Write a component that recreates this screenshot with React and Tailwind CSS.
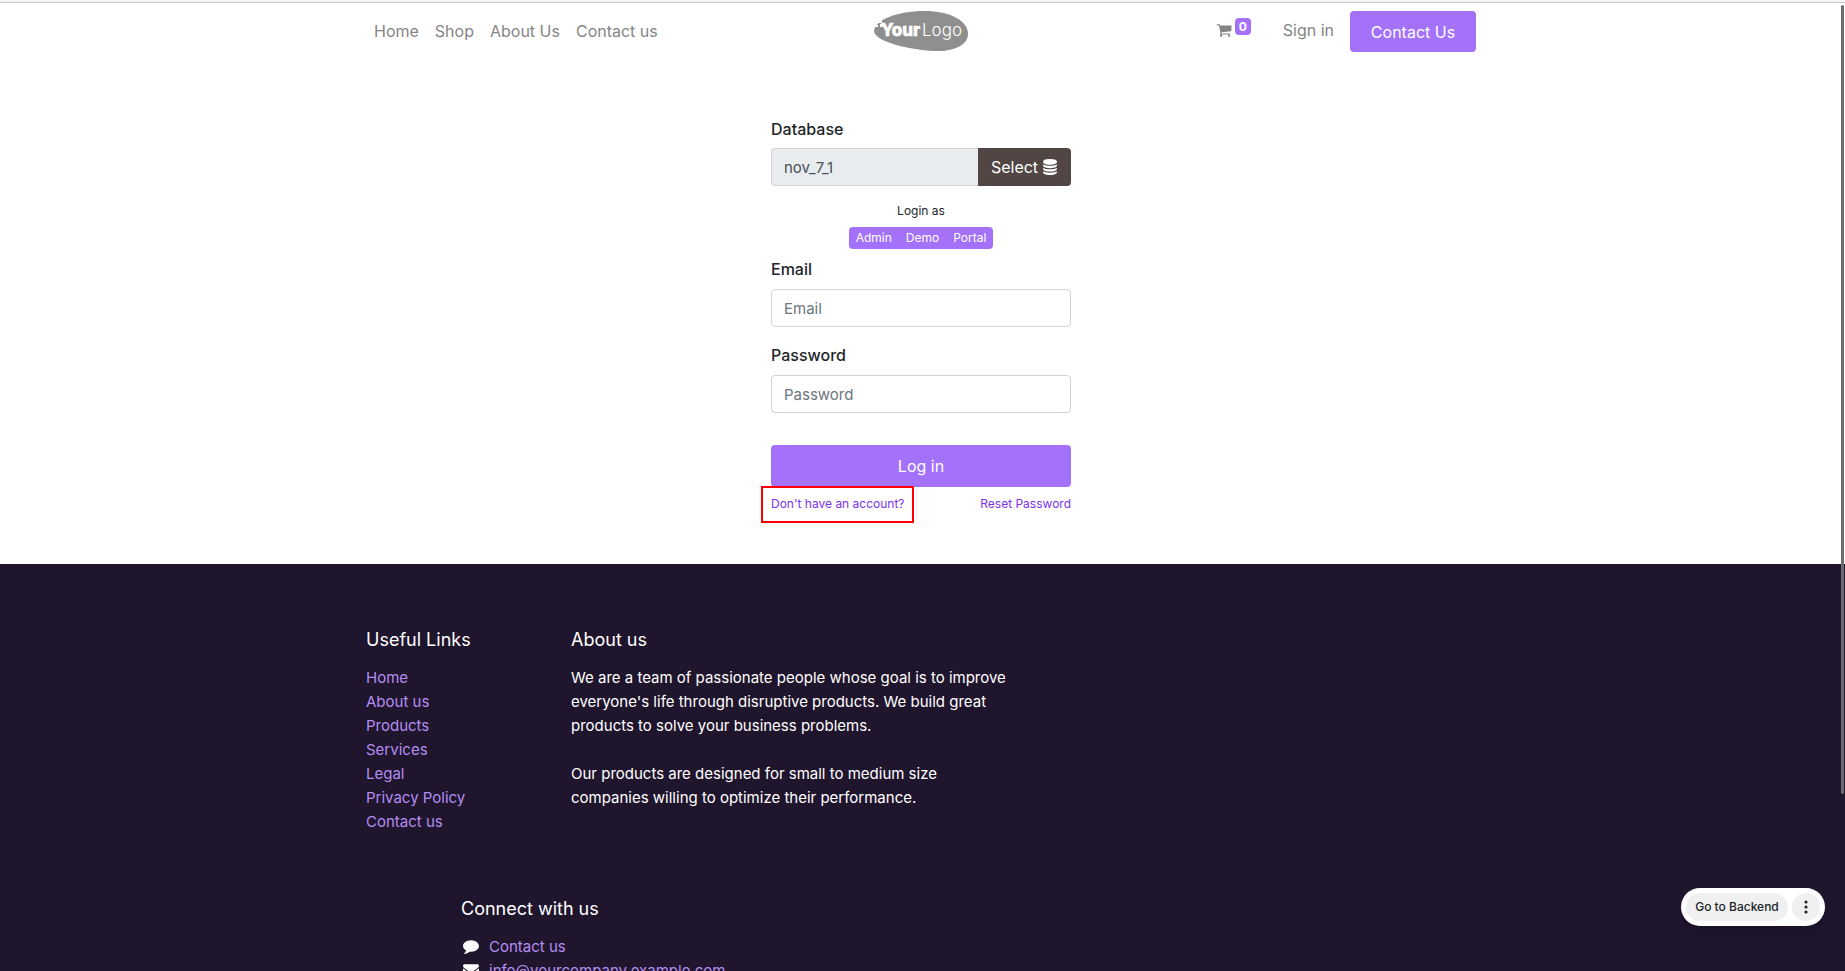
import React from "react";

const paths = {
  cart: "M704 1536q0 52-38 90t-90 38-90-38-38-90 38-90 90-38 90 38 38 90zm896 0q0 52-38 90t-90 38-90-38-38-90 38-90 90-38 90 38 38 90zm128-1088v512q0 24-16.5 42.5t-40.5 21.5l-1044 122q13 60 13 70 0 16-24 64h920q26 0 45 19t19 45-19 45-45 19h-1024q-26 0-45-19t-19-45q0-11 8-31.5t16-36 21.5-40 15.5-29.5l-177-823h-204q-26 0-45-19t-19-45 19-45 45-19h256q16 0 28.5 6.5t19.5 15.5 13 24.5 8 26 5.5 29.5 4.5 26h1201q26 0 45 19t19 45z",
  comment: "M1792 896q0 174-120 321.5t-326 233-450 85.5q-70 0-145-8-198 175-460 242-49 14-114 22-17 2-30.5-9t-17.5-29v-1q-3-4-.5-12t2-10 4.5-9.5l6-9 7-8.5 8-9q7-8 31-34.5t34.5-38 31-39.5 32.5-51 27-59 26-76q-157-89-247.5-220t-90.5-281q0-130 71-248.5t191-204.5 286-136.5 348-50.5q244 0 450 85.5t326 233 120 321.5z",
  envelope: "M1792 710v794q0 66-47 113t-113 47h-1472q-66 0-113-47t-47-113v-794q44 49 101 87 362 246 497 345 57 42 92.5 65.5t94.5 48 110 24.5h2q51 0 110-24.5t94.5-48 92.5-65.5q170-123 498-345 57-39 100-87zm0-294q0 79-49 151t-122 123q-376 261-468 325-10 7-42.5 31t-54 38.5-52 32.5-57.5 27-50 9h-2q-23 0-50-9t-57.5-27-52-32.5-54-38.5-42.5-31q-91-64-262-182.5t-205-142.5q-62-42-117-115.5t-55-136.5q0-78 41.5-130t118.5-52h1472q65 0 112.5 47t47.5 113z",
  database: "M896 768q237 0 443-43t325-127v170q0 69-103 128t-280 93.5-385 34.5-385-34.5-280-93.5-103-128v-170q119 84 325 127t443 43zm0 768q237 0 443-43t325-127v170q0 69-103 128t-280 93.5-385 34.5-385-34.5-280-93.5-103-128v-170q119 84 325 127t443 43zm0-384q237 0 443-43t325-127v170q0 69-103 128t-280 93.5-385 34.5-385-34.5-280-93.5-103-128v-170q119 84 325 127t443 43zm0-1152q208 0 385 34.5t280 93.5 103 128v128q0 69-103 128t-280 93.5-385 34.5-385-34.5-280-93.5-103-128v-128q0-69 103-128t280-93.5 385-34.5z",
};

function Icon({ name, className }) {
  return (
    <svg viewBox="0 0 1792 1792" fill="currentColor" aria-hidden="true" className={className}>
      <path d={paths[name]} />
    </svg>
  );
}

function Logo() {
  return (
    <svg viewBox="0 0 94 40" className="h-10 w-[94px]" role="img" aria-label="Your Logo">
      <path
        d="M0 20C1 9 23 0 50 0C77 0 94 10 94 23C94 33 82 40 64 40C42 40 1 32 0 20Z"
        fill="#8f8f8f"
      />
      <path d="M4 10h4v2h-4zM1 14h3v2h-3zM6 13h3v3h-3z" fill="#fff" />
      <text x="7" y="25" fill="#fff" stroke="#fff" strokeWidth="0.5" fontFamily="Inter, sans-serif" fontSize="17" fontWeight="800">Your</text>
      <text x="48" y="25" fill="#fff" fontFamily="Inter, sans-serif" fontSize="17" fontWeight="300">Logo</text>
    </svg>
  );
}

function Field({ id, label, type }) {
  return (
    <div className="flex flex-col gap-2">
      <label htmlFor={id} className="text-base leading-6 font-medium text-[#212529]">{label}</label>
      <input
        id={id}
        type={type}
        placeholder={label}
        className="h-[38px] w-full rounded border border-[#ced4da] bg-white px-3 text-[15px] text-[#495057] placeholder:text-[#6c757d]"
      />
    </div>
  );
}

const navLinks = ["Home", "Shop", "About Us", "Contact us"];
const usefulLinks = ["Home", "About us", "Products", "Services", "Legal", "Privacy Policy", "Contact us"];

export default function App() {
  return (
    <div className="relative flex h-screen flex-col overflow-hidden bg-white pr-[3px] font-['Inter',sans-serif] text-[#212529]">
      <div className="-mr-[3px] h-[3px] shrink-0 border-b border-[#c4c4c4] bg-[#f6f6f6]" />

      <header className="mx-auto grid w-full max-w-[1140px] shrink-0 grid-cols-[1fr_auto_1fr] items-start px-[15px] pt-2 pb-2">
        <nav className="flex gap-4 pt-2 pl-2 text-base leading-6 text-[#858585]">
          {navLinks.map((t) => (
            <a key={t} href="#">{t}</a>
          ))}
        </nav>
        <a href="#"><Logo /></a>
        <div className="flex items-start justify-end text-[#858585]">
          <a href="#" className="mt-[7px] mr-8 flex items-start gap-[3px]" aria-label="Cart, 0 items">
            <Icon name="cart" className="mt-1 size-4" />
            <span className="rounded bg-[#a471fa] px-1 text-xs leading-[17px] font-bold text-white">0</span>
          </a>
          <a href="#" className="mt-[7px] mr-4 text-base leading-6">Sign in</a>
          <a href="#" className="flex h-[41px] w-[126px] items-center justify-center rounded bg-[#a471fa] text-base text-white">
            Contact Us
          </a>
        </div>
      </header>

      <main className="shrink-0 pt-[57px] pb-[41px]">
        <form className="mx-auto flex w-[300px] flex-col" onSubmit={(e) => e.preventDefault()}>
          <div className="flex flex-col gap-[7px]">
            <label htmlFor="db" className="text-base leading-6 font-medium">Database</label>
            <div className="flex">
              <input
                id="db"
                type="text"
                readOnly
                defaultValue="nov_7_1"
                className="h-[38px] min-w-0 flex-1 rounded-l border border-r-0 border-[#ced4da] bg-[#e9ecef] px-3 text-[15px] text-[#495057]"
              />
              <button type="button" className="flex w-[93px] items-center justify-center gap-1 rounded-r bg-[#514644] text-base text-white">
                Select <Icon name="database" className="size-4" />
              </button>
            </div>
          </div>

          <p className="mt-4 text-center text-xs leading-[17px]">Login as</p>
          <div className="mt-2 flex self-center rounded bg-[#a471fa] text-xs leading-[22px] text-white">
            <button type="button" className="px-[7px]">Admin</button>
            <button type="button" className="px-[7px]">Demo</button>
            <button type="button" className="px-[7px]">Portal</button>
          </div>

          <div className="mt-2 flex flex-col gap-4">
            <Field id="email" label="Email" type="email" />
            <Field id="password" label="Password" type="password" />
          </div>

          <button type="submit" className="mt-8 h-[42px] rounded bg-[#a471fa] text-base text-white">Log in</button>
          <div className="-mx-[10px] flex items-start justify-between pr-[10px] text-xs text-[#7a32ea]">
            <a href="#" className="-mt-px h-[37px] border-2 border-[#fb0007] px-2 pt-[7px] leading-[18px]">Don't have an account?</a>
            <a href="#" className="pt-2 leading-[18px]">Reset Password</a>
          </div>
        </form>
      </main>

      <footer className="-mr-[3px] flex-1 bg-[#1f152d] pt-[65px] pr-[3px] text-white">
        <div className="mx-auto max-w-[1140px] px-[15px]">
          <div className="flex text-[15px] leading-6">
            <section className="w-[205px]">
              <h2 className="mb-[15px] text-lg leading-[22px]">Useful Links</h2>
              <ul className="text-[#b58df2]">
                {usefulLinks.map((t) => (
                  <li key={t}><a href="#">{t}</a></li>
                ))}
              </ul>
            </section>
            <section className="w-[445px]">
              <h2 className="mb-[15px] text-lg leading-[22px]">About us</h2>
              <p>
                We are a team of passionate people whose goal is to improve everyone's life through
                disruptive products. We build great products to solve your business problems.
              </p>
              <p className="mt-6">
                Our products are designed for small to medium size
                <br />
                companies willing to optimize their performance.
              </p>
            </section>
          </div>
          <section className="mt-16 ml-[95px] text-[15px] leading-6">
            <h2 className="mb-[15px] text-lg leading-[22px]">Connect with us</h2>
            <ul>
              <li className="flex items-start gap-2">
                <span className="flex w-5 justify-center pt-[3px]"><Icon name="comment" className="size-4" /></span>
                <a href="#" className="text-[#b58df2]">Contact us</a>
              </li>
              <li className="flex items-start gap-2">
                <span className="flex w-5 justify-center pt-[3px]"><Icon name="envelope" className="size-4" /></span>
                <a href="#" className="text-[#b58df2]">info@yourcompany.example.com</a>
              </li>
            </ul>
          </section>
        </div>
      </footer>

      <div className="absolute right-5 bottom-[45px] flex gap-1 rounded-full bg-white p-[5px] shadow-lg">
        <button type="button" className="h-7 w-[102px] rounded-full bg-[#f0f0f0] text-xs font-medium text-[#212529]">
          Go to Backend
        </button>
        <button type="button" aria-label="More options" className="flex size-7 items-center justify-center rounded-full bg-[#f0f0f0]">
          <svg viewBox="0 0 4 14" className="h-[14px] w-1" fill="#212529">
            <circle cx="2" cy="2" r="1.6" />
            <circle cx="2" cy="7" r="1.6" />
            <circle cx="2" cy="12" r="1.6" />
          </svg>
        </button>
      </div>
      <div className="absolute top-[5px] right-px h-[789px] w-[3px] rounded-full bg-[#6c6c6c]" />
    </div>
  );
}
